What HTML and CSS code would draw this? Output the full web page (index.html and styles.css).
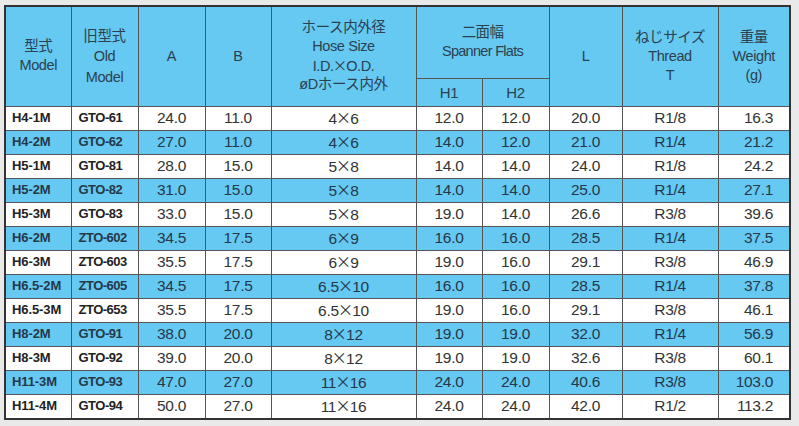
FILE: index.html
```html
<!DOCTYPE html>
<html lang="ja">
<head>
<meta charset="utf-8">
<title>Spec table</title>
<link rel="stylesheet" href="styles.css">
</head>
<body>
<table class="spec">
  <colgroup>
    <col class="c-model"><col class="c-old"><col class="c-a"><col class="c-b"><col class="c-hose"><col class="c-h1"><col class="c-h2"><col class="c-l"><col class="c-thread"><col class="c-weight">
  </colgroup>
  <thead>
    <tr class="head-top">
      <th rowspan="2">型式<br>Model</th>
      <th rowspan="2" class="old">旧型式<br>Old<br>Model</th>
      <th rowspan="2">A</th>
      <th rowspan="2">B</th>
      <th rowspan="2" class="hose">ホース内外径<br>Hose Size<br>I.D.<span class="x">×</span>O.D.<br>øDホース内外</th>
      <th colspan="2" class="flats">二面幅<br>Spanner Flats</th>
      <th rowspan="2">L</th>
      <th rowspan="2">ねじサイズ<br>Thread<br>T</th>
      <th rowspan="2">重量<br>Weight<br>(g)</th>
    </tr>
    <tr class="head-sub">
      <th>H1</th>
      <th>H2</th>
    </tr>
  </thead>
  <tbody>
    <tr><td class="m">H4-1M</td><td class="o">GTO-61</td><td>24.0</td><td>11.0</td><td>4<span class="x">×</span>6</td><td>12.0</td><td>12.0</td><td>20.0</td><td>R1/8</td><td class="w">16.3</td></tr>
    <tr class="alt"><td class="m">H4-2M</td><td class="o">GTO-62</td><td>27.0</td><td>11.0</td><td>4<span class="x">×</span>6</td><td>14.0</td><td>12.0</td><td>21.0</td><td>R1/4</td><td class="w">21.2</td></tr>
    <tr><td class="m">H5-1M</td><td class="o">GTO-81</td><td>28.0</td><td>15.0</td><td>5<span class="x">×</span>8</td><td>14.0</td><td>14.0</td><td>24.0</td><td>R1/8</td><td class="w">24.2</td></tr>
    <tr class="alt"><td class="m">H5-2M</td><td class="o">GTO-82</td><td>31.0</td><td>15.0</td><td>5<span class="x">×</span>8</td><td>14.0</td><td>14.0</td><td>25.0</td><td>R1/4</td><td class="w">27.1</td></tr>
    <tr><td class="m">H5-3M</td><td class="o">GTO-83</td><td>33.0</td><td>15.0</td><td>5<span class="x">×</span>8</td><td>19.0</td><td>14.0</td><td>26.6</td><td>R3/8</td><td class="w">39.6</td></tr>
    <tr class="alt"><td class="m">H6-2M</td><td class="o">ZTO-602</td><td>34.5</td><td>17.5</td><td>6<span class="x">×</span>9</td><td>16.0</td><td>16.0</td><td>28.5</td><td>R1/4</td><td class="w">37.5</td></tr>
    <tr><td class="m">H6-3M</td><td class="o">ZTO-603</td><td>35.5</td><td>17.5</td><td>6<span class="x">×</span>9</td><td>19.0</td><td>16.0</td><td>29.1</td><td>R3/8</td><td class="w">46.9</td></tr>
    <tr class="alt"><td class="m">H6.5-2M</td><td class="o">ZTO-605</td><td>34.5</td><td>17.5</td><td>6.5<span class="x">×</span>10</td><td>16.0</td><td>16.0</td><td>28.5</td><td>R1/4</td><td class="w">37.8</td></tr>
    <tr><td class="m">H6.5-3M</td><td class="o">ZTO-653</td><td>35.5</td><td>17.5</td><td>6.5<span class="x">×</span>10</td><td>19.0</td><td>16.0</td><td>29.1</td><td>R3/8</td><td class="w">46.1</td></tr>
    <tr class="alt"><td class="m">H8-2M</td><td class="o">GTO-91</td><td>38.0</td><td>20.0</td><td>8<span class="x">×</span>12</td><td>19.0</td><td>19.0</td><td>32.0</td><td>R1/4</td><td class="w">56.9</td></tr>
    <tr><td class="m">H8-3M</td><td class="o">GTO-92</td><td>39.0</td><td>20.0</td><td>8<span class="x">×</span>12</td><td>19.0</td><td>19.0</td><td>32.6</td><td>R3/8</td><td class="w">60.1</td></tr>
    <tr class="alt"><td class="m">H11-3M</td><td class="o">GTO-93</td><td>47.0</td><td>27.0</td><td>11<span class="x">×</span>16</td><td>24.0</td><td>24.0</td><td>40.6</td><td>R3/8</td><td class="w">103.0</td></tr>
    <tr><td class="m">H11-4M</td><td class="o">GTO-94</td><td>50.0</td><td>27.0</td><td>11<span class="x">×</span>16</td><td>24.0</td><td>24.0</td><td>42.0</td><td>R1/2</td><td class="w">113.2</td></tr>
  </tbody>
</table>
</body>
</html>
```
FILE: styles.css
```css
html, body {
  margin: 0;
  padding: 0;
}
body {
  background: #e9e9e9;
  padding: 5px 0 0 4px;
  font-family: "Liberation Sans", "Noto Sans CJK JP", sans-serif;
  color: #333;
}
.spec {
  border-collapse: collapse;
  table-layout: fixed;
  width: 785px;
  border: 2px solid #333;
  background: #fff;
}
.c-model { width: 66px; }
.c-old { width: 67px; }
.c-a { width: 67px; }
.c-b { width: 66px; }
.c-hose { width: 145px; }
.c-h1 { width: 66px; }
.c-h2 { width: 67px; }
.c-l { width: 73px; }
.c-thread { width: 96px; }
.c-weight { width: 72px; }

.spec th, .spec td {
  border: 1px solid #555;
  padding: 0;
}
.spec th {
  background: #66c9f1;
  color: #2b4150;
  font-weight: normal;
  font-size: 14.5px;
  letter-spacing: -0.4px;
  line-height: 19px;
  text-align: center;
  vertical-align: middle;
}
.spec th.old { line-height: 20.5px; }
.spec th.hose { line-height: 18.7px; }
.spec th.flats { letter-spacing: -0.7px; }
.head-top { height: 72px; }
.head-sub { height: 28px; }
.head-sub th { font-size: 15px; letter-spacing: -0.4px; }

.x {
  font-family: "Noto Sans CJK JP", sans-serif;
  letter-spacing: 0;
  margin: 0 -1px;
}

.spec td {
  height: 23px;
  font-size: 15.5px;
  letter-spacing: -0.3px;
  text-align: center;
  vertical-align: middle;
  line-height: 20px;
}
.spec tr.alt td {
  background: #66c9f1;
  color: #24384a;
}
.spec td.m, .spec td.o {
  text-align: left;
  font-weight: bold;
  font-size: 13px;
  letter-spacing: -0.1px;
  color: #222;
  padding-left: 6px;
}
.spec td.o { padding-left: 7px; letter-spacing: -0.5px; }
.spec td.w {
  text-align: right;
  padding-right: 16px;
}
```
